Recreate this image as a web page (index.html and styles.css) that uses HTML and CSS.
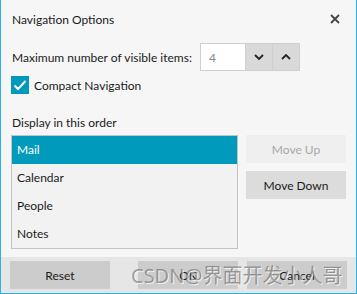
FILE: index.html
```html
<!DOCTYPE html>
<html lang="en">
<head>
  <meta charset="UTF-8">
  <title>Navigation Options</title>
  <link rel="stylesheet" href="styles.css">
</head>
<body>
  <div class="dialog">
    <div class="titlebar">
      <span class="title">Navigation Options</span>
      <svg class="close" width="10" height="10" viewBox="0 0 10 10">
        <path d="M1 1 L9 9 M9 1 L1 9" stroke="#444" stroke-width="1.8" fill="none"/>
      </svg>
    </div>

    <div class="content">
      <div class="row">
        <label for="maxItems">Maximum number of visible items:</label>
        <div class="spin">
          <input id="maxItems" type="text" value="4">
          <button class="spin-btn" aria-label="Decrease">
            <svg width="10" height="6" viewBox="0 0 10 6"><path d="M1 1 L5 5 L9 1" stroke="#222" stroke-width="1.8" fill="none"/></svg>
          </button>
          <button class="spin-btn" aria-label="Increase">
            <svg width="10" height="6" viewBox="0 0 10 6"><path d="M1 5 L5 1 L9 5" stroke="#222" stroke-width="1.8" fill="none"/></svg>
          </button>
        </div>
      </div>

      <div class="check-row">
        <span class="checkbox">
          <svg width="14" height="12" viewBox="0 0 14 12"><path d="M1.5 6.5 L5 10 L12.5 2" stroke="#fff" stroke-width="2" fill="none"/></svg>
        </span>
        <span>Compact Navigation</span>
      </div>

      <div class="order-label">Display in this order</div>
      <div class="order">
        <ul class="list">
          <li class="selected">Mail</li>
          <li>Calendar</li>
          <li>People</li>
          <li>Notes</li>
        </ul>
        <div class="side-btns">
          <button class="btn disabled">Move Up</button>
          <button class="btn">Move Down</button>
        </div>
      </div>
    </div>

    <div class="footer">
      <button class="btn footer-btn">Reset</button>
      <div class="footer-right">
        <button class="btn footer-btn">OK</button>
        <button class="btn footer-btn">Cancel</button>
      </div>
    </div>

    <div class="watermark">CSDN@界面开发小人哥</div>
  </div>
</body>
</html>
```

FILE: styles.css
```css
* { box-sizing: border-box; margin: 0; padding: 0 }
body {
  font-family: "Segoe UI", Lato, "Noto Sans CJK SC", sans-serif;
  font-size: 12px;
  color: #1a1a1a;
  background: #fff;
}
.dialog {
  position: relative;
  width: 357px;
  height: 294px;
  overflow: hidden;
  background: #f6f6f6;
  border: 1px solid #27b2e8;
  border-top: none;
  display: flex;
  flex-direction: column;
}
.titlebar {
  height: 38px;
  flex-shrink: 0;
  display: flex;
  align-items: center;
  justify-content: space-between;
  padding: 0 16px 0 11px;
}
.close { margin-top: -1px }

.content {
  flex: 1;
  padding: 5px 0 0 10px;
}
.row {
  display: flex;
  align-items: center;
  gap: 8px;
  height: 28px;
  padding-left: 1px;
}
.spin { display: flex; height: 28px }
.spin input {
  width: 46px;
  height: 28px;
  border: 1px solid #cfcfcf;
  background: #fff;
  color: #888;
  font: inherit;
  padding-left: 8px;
  outline: none;
}
.spin-btn {
  width: 27px;
  height: 28px;
  border: 1px solid #cfcfcf;
  border-left: none;
  background: #d9d9d9;
  display: flex;
  align-items: center;
  justify-content: center;
}

.check-row {
  display: flex;
  align-items: center;
  gap: 5px;
  margin-top: 5px;
  height: 18px;
}
.checkbox {
  width: 18px;
  height: 18px;
  background: #0099bc;
  display: flex;
  align-items: center;
  justify-content: center;
}

.order-label {
  margin-top: 20px;
  padding-left: 1px;
  line-height: 18px;
}
.order {
  display: flex;
  gap: 8px;
  margin-top: 3px;
}
.list {
  list-style: none;
  width: 227px;
  border: 1px solid #c3c3c3;
  background: #f2f2f2;
}
.list li {
  height: 28px;
  line-height: 28px;
  padding-left: 5px;
}
.list li.selected { background: #009abd; color: #fff }
.side-btns {
  display: flex;
  flex-direction: column;
  gap: 8px;
}
.btn {
  width: 100px;
  height: 28px;
  border: none;
  background: #dcdcdc;
  color: #1a1a1a;
  font: inherit;
}
.btn.disabled { background: #efefef; color: #a8a8a8 }

.footer {
  height: 36px;
  flex-shrink: 0;
  background: #e6e6e6;
  display: flex;
  align-items: center;
  justify-content: space-between;
  padding: 0 9px;
}
.footer-right { display: flex; gap: 9px }
.footer-btn { background: #cccccc }

.watermark {
  position: absolute;
  left: 130px;
  top: 260px;
  white-space: nowrap;
  font-size: 20px;
  color: rgba(90, 90, 90, 0.55);
  text-shadow: 1px 1px 0 rgba(255, 255, 255, 0.7);
  font-family: "Noto Sans", "Noto Sans CJK SC", sans-serif;
  pointer-events: none;
}
```
